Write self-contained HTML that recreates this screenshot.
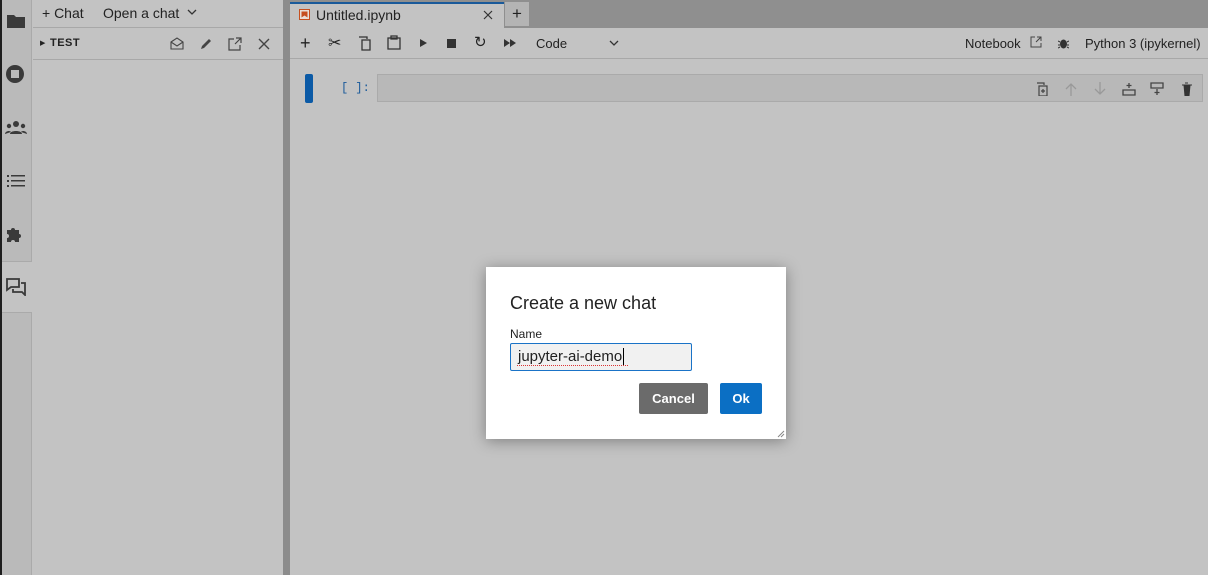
<!DOCTYPE html>
<html><head><style>
*{box-sizing:border-box;margin:0;padding:0}
body{width:1208px;height:575px;overflow:hidden;background:#c3c3c3;font-family:"Liberation Sans",Arial,sans-serif;position:relative;color:#222}
.abs{position:absolute}
svg{display:block}
</style></head><body>
<div class="abs" style="left:0;top:0;width:2px;height:575px;background:#1e1e1e"></div>
<div class="abs" style="left:2px;top:0;width:30px;height:575px;background:#bababa;border-right:1px solid #aaa"></div>
<div class="abs" style="left:2px;top:261px;width:30px;height:52px;background:#c3c3c3;border-top:1px solid #aaa;border-bottom:1px solid #aaa"></div>
<svg class="abs" style="left:6px;top:12px" width="20" height="18" viewBox="0 0 20 18"><path d="M1 3h7l2 2h9v11H1z" fill="#3a3a3a"/></svg>
<svg class="abs" style="left:5px;top:64px" width="20" height="20" viewBox="0 0 20 20"><circle cx="10" cy="10" r="9" fill="#3a3a3a"/><rect x="6" y="6" width="8" height="8" fill="#bababa"/></svg>
<svg class="abs" style="left:5px;top:120px" width="22" height="16" viewBox="0 0 22 16"><circle cx="11" cy="4" r="3" fill="#3a3a3a"/><circle cx="4" cy="6" r="2.2" fill="#3a3a3a"/><circle cx="18" cy="6" r="2.2" fill="#3a3a3a"/><path d="M5 14c0-4 12-4 12 0zM0 14c0-3 5-4 6-2zM22 14c0-3-5-4-6-2z" fill="#3a3a3a"/></svg>
<svg class="abs" style="left:7px;top:174px" width="18" height="14" viewBox="0 0 18 14"><g fill="#3a3a3a"><rect x="0" y="1" width="2" height="2"/><rect x="4" y="1" width="14" height="1.5"/><rect x="0" y="6" width="2" height="2"/><rect x="4" y="6" width="14" height="1.5"/><rect x="0" y="11" width="2" height="2"/><rect x="4" y="11" width="14" height="1.5"/></g></svg>
<svg class="abs" style="left:6px;top:225px" width="18" height="18" viewBox="0 0 18 18"><path d="M1 5h4a2 2 0 1 1 4 0h4v4a2 2 0 1 1 0 4v4H9a2 2 0 1 0-4 0H1v-4a2 2 0 1 0 0-4z" fill="#3a3a3a"/></svg>
<svg class="abs" style="left:6px;top:278px" width="20" height="18" viewBox="0 0 20 18"><path d="M1 1h12v8H5l-4 3z" fill="none" stroke="#3a3a3a" stroke-width="1.8"/><path d="M15 5h4v12l-3-3H7v-3" fill="none" stroke="#3a3a3a" stroke-width="1.8"/></svg>

<div class="abs" style="left:33px;top:0;width:250px;height:28px;border-bottom:1px solid #a8a8a8;font-size:14px">
 <span class="abs" style="left:9px;top:5px">+ Chat</span>
 <span class="abs" style="left:70px;top:5px">Open a chat</span>
 <svg class="abs" style="left:154px;top:9px" width="10" height="6" viewBox="0 0 10 6"><path d="M1 1l4 4 4-4" fill="none" stroke="#333" stroke-width="1.3"/></svg>
</div>
<div class="abs" style="left:33px;top:28px;width:250px;height:32px;border-bottom:1px solid #a8a8a8">
 <span class="abs" style="left:7px;top:11px;font-size:7px">&#9654;</span>
 <span class="abs" style="left:17px;top:9px;font-size:11px;font-weight:bold;letter-spacing:.5px">TEST</span>
 <svg class="abs" style="left:137px;top:9px" width="14" height="13" viewBox="0 0 14 13"><path d="M1 5l6-4 6 4v7H1zM1 5l6 4 6-4" fill="none" stroke="#444" stroke-width="1.1"/></svg>
 <svg class="abs" style="left:166px;top:9px" width="14" height="14" viewBox="0 0 14 14"><path d="M2 12l1-3 7-7 2 2-7 7z" fill="#444"/></svg>
 <svg class="abs" style="left:195px;top:9px" width="14" height="14" viewBox="0 0 14 14"><path d="M6 2H1v11h11V8M8 1h5v5M13 1L7 7" fill="none" stroke="#444" stroke-width="1.2"/></svg>
 <svg class="abs" style="left:225px;top:10px" width="12" height="12" viewBox="0 0 12 12"><path d="M1 1l10 10M11 1L1 11" stroke="#444" stroke-width="1.4"/></svg>
</div>
<div class="abs" style="left:283px;top:0;width:7px;height:575px;background:#8c8c8c"></div>

<div class="abs" style="left:290px;top:0;width:918px;height:28px;background:#8f8f8f"></div>
<div class="abs" style="left:290px;top:2px;width:214px;height:27px;background:#c3c3c3;border-top:2px solid #1a5a9a"></div>
<svg class="abs" style="left:299px;top:9px" width="11" height="11" viewBox="0 0 11 11"><rect x=".5" y=".5" width="10" height="10" fill="#e8e0d8" stroke="#c65020"/><path d="M2.5 2.5h6v6l-3-2-3 2z" fill="#c65020"/></svg>
<span class="abs" style="left:316px;top:7px;font-size:14px">Untitled.ipynb</span>
<svg class="abs" style="left:483px;top:10px" width="10" height="10" viewBox="0 0 10 10"><path d="M1 1l8 8M9 1L1 9" stroke="#333" stroke-width="1.2"/></svg>
<div class="abs" style="left:505px;top:2px;width:24px;height:24px;background:#b4b4b4;text-align:center;font-size:17px;line-height:24px">+</div>

<div class="abs" style="left:290px;top:28px;width:918px;height:31px;border-bottom:1px solid #a8a8a8;font-size:13px"></div>
<div class="abs" style="left:290px;top:28px;height:31px;width:918px">
 <span class="abs" style="left:10px;top:5px;font-size:18px">+</span>
 <span class="abs" style="left:38px;top:5px;font-size:16px">&#9986;</span>
 <svg class="abs" style="left:68px;top:8px" width="14" height="15" viewBox="0 0 14 15"><path d="M1 1h8v2M4 4h8v10H4z" fill="none" stroke="#333" stroke-width="1.3"/></svg>
 <svg class="abs" style="left:97px;top:7px" width="14" height="15" viewBox="0 0 14 15"><path d="M1 3h12v11H1zM4 1h6v3H4z" fill="none" stroke="#333" stroke-width="1.3"/></svg>
 <svg class="abs" style="left:129px;top:10px" width="9" height="10" viewBox="0 0 9 10"><path d="M1 1l7 4-7 4z" fill="#333"/></svg>
 <div class="abs" style="left:157px;top:11px;width:9px;height:9px;background:#333"></div>
 <span class="abs" style="left:184px;top:5px;font-size:15px">&#8635;</span>
 <svg class="abs" style="left:214px;top:10px" width="12" height="10" viewBox="0 0 12 10"><path d="M0 1l6 4-6 4zM6 1l6 4-6 4z" fill="#333"/></svg>
 <span class="abs" style="left:246px;top:8px;font-size:13px">Code</span>
 <svg class="abs" style="left:319px;top:12px" width="10" height="6" viewBox="0 0 10 6"><path d="M1 1l4 4 4-4" fill="none" stroke="#333" stroke-width="1.3"/></svg>
 <span class="abs" style="left:675px;top:8px;font-size:13px">Notebook</span>
 <svg class="abs" style="left:740px;top:8px" width="12" height="12" viewBox="0 0 12 12"><path d="M5 1H1v10h10V7M7 1h4v4M11 1L6 6" fill="none" stroke="#444" stroke-width="1"/></svg>
 <svg class="abs" style="left:768px;top:9px" width="11" height="12" viewBox="0 0 11 12"><ellipse cx="5.5" cy="7" rx="3.5" ry="4.5" fill="#333"/><path d="M0 4l2 1M11 4L9 5M0 8h2M11 8H9M0 11l2-1M11 11l-2-1" stroke="#333"/></svg>
 <span class="abs" style="left:795px;top:8px;font-size:13px;white-space:nowrap">Python 3 (ipykernel)</span>
</div>

<div class="abs" style="left:305px;top:74px;width:8px;height:29px;background:#0b5aa6;border-radius:2px"></div>
<span class="abs" style="left:341px;top:81px;font-family:'Liberation Mono',monospace;font-size:12px;color:#1a5a9a">[ ]:</span>
<div class="abs" style="left:377px;top:74px;width:826px;height:28px;background:#b8b8b8;border:1px solid #aaa"></div>
<svg class="abs" style="left:1036px;top:82px" width="160" height="14" viewBox="0 0 160 14">
 <g fill="none" stroke="#444" stroke-width="1.2"><path d="M1 1h7v2M3 4h8v10H3zM7 7v4M5 9h4"/></g>
 <g fill="none" stroke="#999" stroke-width="1.3"><path d="M35 14V2M30 7l5-5 5 5M64 0v12M59 7l5 5 5-5"/></g>
 <g fill="none" stroke="#444" stroke-width="1.3"><path d="M87 8h12v5H87zM93 1v5M90.5 3.5h5"/><path d="M115 1h12v5h-12zM121 7v6M118.5 10.5h5"/></g>
 <path d="M146 3h10M148 3l1 11h4l1-11M149 1h3" fill="#333" stroke="#333"/>
</svg>

<div class="abs" style="left:486px;top:267px;width:300px;height:172px;background:#fff;box-shadow:0 2px 14px rgba(0,0,0,.35)">
 <div class="abs" style="left:24px;top:26px;font-size:18px;color:#222">Create a new chat</div>
 <div class="abs" style="left:24px;top:60px;font-size:12px">Name</div>
 <div class="abs" style="left:24px;top:76px;width:182px;height:28px;background:#f1f1f1;border:1px solid #1a73c7;border-radius:2px;font-size:15px;padding:4px 0 0 7px">jupyter-ai-demo<span style="border-left:1px solid #000;margin-left:1px"></span></div>
 <div class="abs" style="left:31px;top:98px;width:111px;border-top:1px dotted #d33"></div>
 <div class="abs" style="left:153px;top:116px;width:69px;height:31px;background:#6b6b6b;border-radius:2px;color:#fff;font-size:13px;font-weight:bold;text-align:center;line-height:31px">Cancel</div>
 <div class="abs" style="left:234px;top:116px;width:42px;height:31px;background:#0b6fc4;border-radius:2px;color:#fff;font-size:13px;font-weight:bold;text-align:center;line-height:31px">Ok</div>
 <svg class="abs" style="left:291px;top:163px" width="8" height="8" viewBox="0 0 8 8"><path d="M1 7l6-6M4 7l3-3" stroke="#888"/></svg>
</div>
</body></html>
